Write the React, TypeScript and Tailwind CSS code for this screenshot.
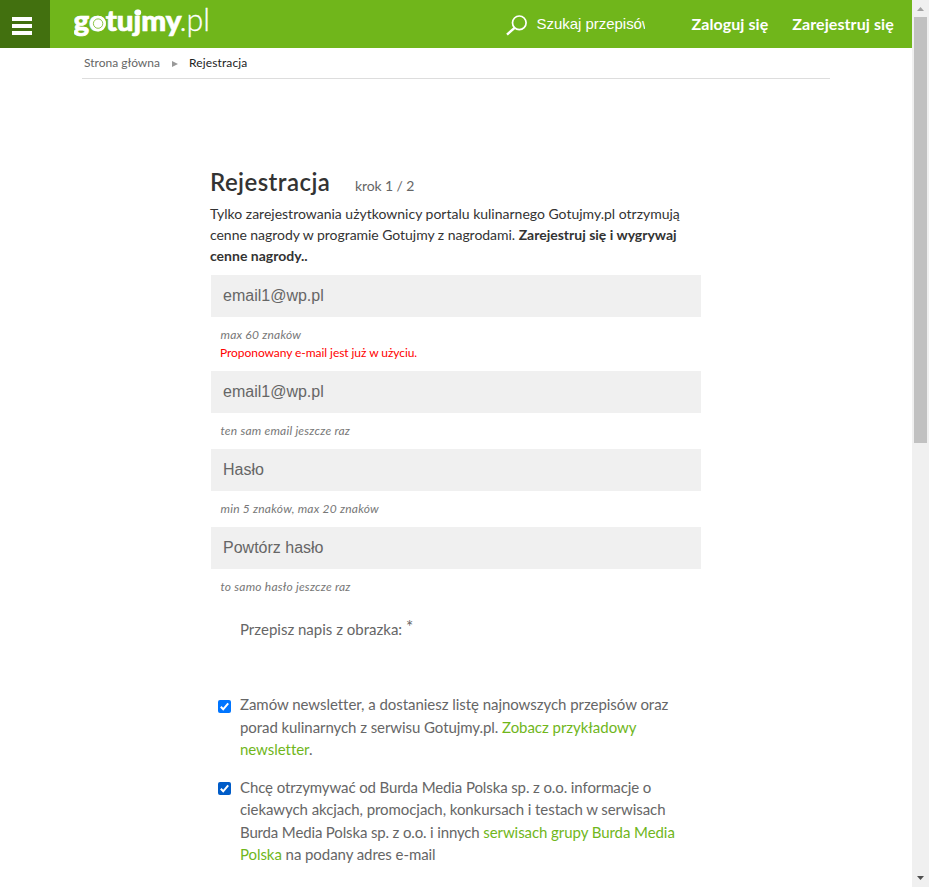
import React from "react";

function Hint({ children }: { children: React.ReactNode }) {
  return <p className="h-[18px] pl-[10.5px] text-[12px] leading-[18px] tracking-[0.22px] whitespace-nowrap text-[#777] italic">{children}</p>;
}

function Field({ value, hint, error }: { value: string; hint: string; error?: string }) {
  return (
    <div className="mb-[9px]">
      <div className="ml-px flex h-[42px] w-[490px] items-center bg-[#f0f0f0] pl-3 font-['Liberation_Sans',Arial,sans-serif] text-[16px] text-[#666]">
        {value}
      </div>
      <div className="pt-[9px]">
        <Hint>{hint}</Hint>
        {error && <p className="h-[18px] pl-2.5 text-[12px] leading-[18px] tracking-[-0.06px] whitespace-nowrap text-[#f00]">{error}</p>}
      </div>
    </div>
  );
}

function Check({ dark }: { dark?: boolean }) {
  return (
    <svg className="mt-[7px] ml-2 h-[13px] w-[13px] shrink-0" viewBox="0 0 13 13">
      <rect width="13" height="13" rx="2" fill={dark ? "#005cc8" : "#0075ff"} />
      <path d="M2.8 6.8 5.2 9.3 10.2 3.4" fill="none" stroke="#fff" strokeWidth="2" />
    </svg>
  );
}

export default function App() {
  return (
    <div className="flex h-[887px] w-[929px] overflow-hidden bg-white font-['Lato',sans-serif]">
      <div className="w-[912px] shrink-0">
        <header className="flex h-12 bg-[#70b61b] text-white">
          <div className="flex w-[50px] flex-col gap-[3px] bg-[#42700f] pt-[17px] pl-3">
            <span className="h-1 w-5 bg-white" />
            <span className="h-1 w-5 bg-white" />
            <span className="h-1 w-5 bg-white" />
          </div>
          <svg className="ml-6 h-12 w-[140px]" viewBox="74 0 140 48" fill="#fff">
            <text x="73.5" y="31.3" fontSize="29" fontWeight="900" textLength="108" lengthAdjust="spacingAndGlyphs" stroke="#fff" strokeWidth="0.7">gotujmy</text>
            <circle cx="98.1" cy="23.6" r="7.8" />
            <circle cx="98.1" cy="23.6" r="4.7" fill="none" stroke="#70b61b" strokeWidth="0.8" />
            <circle cx="138.2" cy="12.6" r="3" />
            <text x="179.5" y="31.4" fontSize="31" fontWeight="300" textLength="30.5" lengthAdjust="spacingAndGlyphs" stroke="#fff" strokeWidth="0.3">.pl</text>
          </svg>
          <svg className="ml-[291px] h-12 w-6" viewBox="505 0 24 48" fill="none" stroke="#fff">
            <circle cx="519.3" cy="22.8" r="6.8" strokeWidth="1.7" />
            <path d="M514.6 27.8 507 34.6" strokeWidth="2.4" />
          </svg>
          <div className="ml-[7px] h-12 w-[109px] overflow-hidden pl-[0.5px] font-['Liberation_Sans',Arial,sans-serif] text-[15px] leading-12 tracking-[-0.03px] whitespace-nowrap">Szukaj przepisów</div>
          <nav className="ml-[46.5px] flex gap-6 text-[16px] leading-[47px] font-bold tracking-[0.08px] whitespace-nowrap">
            <a>Zaloguj się</a>
            <a>Zarejestruj się</a>
          </nav>
        </header>
        <div className="ml-[82px] flex h-[31px] w-[748px] border-b border-[#ddd] pl-0.5 text-[12px] leading-[30px] text-[#666]">
          <span className="w-[88px] whitespace-nowrap">Strona główna</span>
          <svg className="mt-[13px] h-[6px] w-[6px]" viewBox="0 0 6 6"><path d="M0 0 6 3 0 6Z" fill="#999" /></svg>
          <span className="ml-[11px] tracking-[0.13px] text-[#222]">Rejestracja</span>
        </div>
        <main className="ml-[210px] w-[492px] pt-[85px]">
          <div className="flex h-[39px] items-baseline">
            <h1 className="w-[145px] text-[24px] leading-9 font-semibold tracking-[0.45px] text-[#333]">Rejestracja</h1>
            <span className="text-[14px] tracking-[-0.1px] text-[#666]">krok 1 / 2</span>
          </div>
          <p className="h-[72px] text-[14px] leading-[21px] whitespace-nowrap text-[#333]">
            Tylko zarejestrowania użytkownicy portalu kulinarnego Gotujmy.pl otrzymują<br />
            <span className="tracking-[-0.04px]">cenne nagrody w programie Gotujmy z nagrodami. </span><b>Zarejestruj się i wygrywaj<br />cenne nagrody..</b>
          </p>
          <Field value="email1@wp.pl" hint="max 60 znaków" error="Proponowany e-mail jest już w użyciu." />
          <Field value="email1@wp.pl" hint="ten sam email jeszcze raz" />
          <Field value="Hasło" hint="min 5 znaków, max 20 znaków" />
          <Field value="Powtórz hasło" hint="to samo hasło jeszcze raz" />
          <div className="flex h-[88px] pt-[13px] pl-[30px] text-[15px] leading-[22px] whitespace-nowrap text-[#666]">
            Przepisz napis z obrazka: <span className="-mt-[2px] ml-1 text-[17px]">*</span>
          </div>
          <div className="flex h-[82px] text-[15px] leading-[22.5px] tracking-[-0.045px] whitespace-nowrap text-[#666]">
            <Check />
            <p className="ml-[9px]">
              Zamów newsletter, a dostaniesz listę najnowszych przepisów oraz<br />
              <span className="tracking-[-0.07px]">porad kulinarnych z serwisu Gotujmy.pl. </span><a className="text-[#70b61b]">Zobacz przykładowy<br />newsletter</a>.
            </p>
          </div>
          <div className="flex text-[15px] leading-[22.5px] tracking-[-0.07px] whitespace-nowrap text-[#666]">
            <Check dark />
            <p className="ml-[9px] pt-[0.7px]">
              <span className="tracking-[-0.11px]">Chcę otrzymywać od Burda Media Polska sp. z o.o. informacje o</span><br />
              ciekawych akcjach, promocjach, konkursach i testach w serwisach<br />
              <span className="tracking-[-0.15px]">Burda Media Polska sp. z o.o. i innych </span><a className="text-[#70b61b]">serwisach grupy Burda Media</a><br />
              <a className="text-[#70b61b]">Polska</a> na podany adres e-mail
            </p>
          </div>
        </main>
      </div>
      <div className="flex w-[17px] flex-col items-center bg-[#f0f0f0]">
        <svg className="h-[17px] w-[17px]" viewBox="0 0 17 17"><path d="M5 11h7L8.5 7Z" fill="#a3a3a3" /></svg>
        <div className="h-[426px] w-[13px] bg-[#c1c1c1]" />
        <svg className="mt-auto h-[17px] w-[17px]" viewBox="0 0 17 17"><path d="M5 6h7L8.5 10Z" fill="#505050" /></svg>
      </div>
    </div>
  );
}
